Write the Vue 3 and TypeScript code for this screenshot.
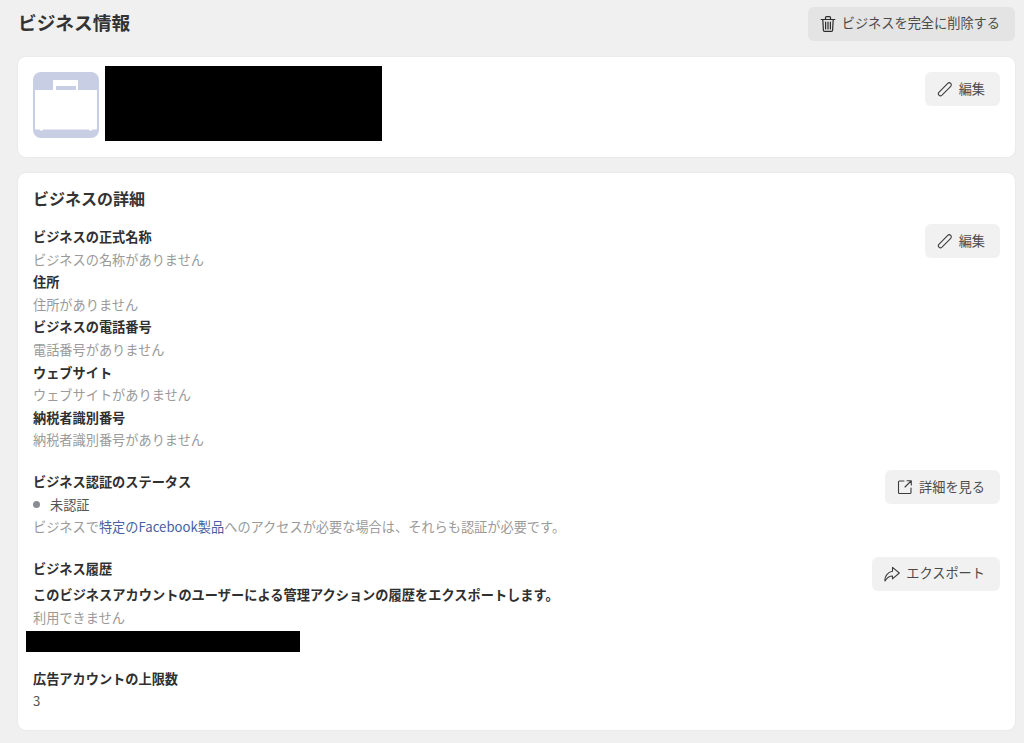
<script setup lang="ts">
const fields = [
  { label: 'ビジネスの正式名称', value: 'ビジネスの名称がありません' },
  { label: '住所', value: '住所がありません' },
  { label: 'ビジネスの電話番号', value: '電話番号がありません' },
  { label: 'ウェブサイト', value: 'ウェブサイトがありません' },
  { label: '納税者識別番号', value: '納税者識別番号がありません' },
]
</script>

<template>
  <main class="page">
    <header class="top">
      <h1>ビジネス情報</h1>
      <button class="btn danger">
        <svg class="ic trash" viewBox="0 0 16 18"><path d="M1.200 4.500h13.600M5.500 4.300V2.600c0-.6.400-1 1-1h3c.6 0 1 .4 1 1v1.700M2.800 4.700l.6 10.500c0 .7.500 1.200 1.200 1.200h6.800c.7 0 1.200-.5 1.200-1.200l.6-10.500M5.600 7v7M8 7v7M10.400 7v7" /></svg>
        <span>ビジネスを完全に削除する</span>
      </button>
    </header>

    <section class="card brand">
      <div class="logo">
        <svg viewBox="0 0 66 66" width="66" height="66">
          <rect width="66" height="66" rx="8" fill="#c8cfe4" />
          <path d="M20 18V8h25v10h-2v-4H23v4z" fill="#fff" />
          <path d="M2 18h62v38.500q0 1-1 1h-4v1h-3v-1H10v1H7v-1H3q-1 0-1-1z" fill="#fff" />
        </svg>
      </div>
      <div class="redact name"></div>
      <button class="btn edit">
        <svg class="ic" viewBox="0 0 16 16"><path d="M2 14.200c-.7-.7-.8-2-.1-2.800L10.500 2.600c1-1 2.400-1 3.200-.2.800.8.800 2.200-.2 3.200L5 14.200c-.9.800-2.200.8-3 0z" /></svg>
        <span>編集</span>
      </button>
    </section>

    <section class="card details">
      <h2>ビジネスの詳細</h2>
      <div class="split fieldset">
        <dl>
          <div v-for="f in fields" :key="f.label">
            <dt>{{ f.label }}</dt>
            <dd>{{ f.value }}</dd>
          </div>
        </dl>
        <button class="btn edit">
          <svg class="ic" viewBox="0 0 16 16"><path d="M2 14.200c-.7-.7-.8-2-.1-2.800L10.500 2.600c1-1 2.400-1 3.200-.2.800.8.800 2.200-.2 3.200L5 14.200c-.9.800-2.200.8-3 0z" /></svg>
          <span>編集</span>
        </button>
      </div>

      <div class="split status">
        <div>
          <div class="label">ビジネス認証のステータス</div>
          <div class="state"><i class="dot"></i>未認証</div>
          <p class="muted">ビジネスで<a href="#">特定のFacebook製品</a>へのアクセスが必要な場合は、それらも認証が必要です。</p>
        </div>
        <button class="btn">
          <svg class="ic" viewBox="0 0 16 16"><path d="M7 2H2.500c-.6 0-1 .4-1 1v10.500c0 .6.400 1 1 1H13c.6 0 1-.4 1-1V9M10 1.700h4.300V6M14 2L8 8" /></svg>
          <span>詳細を見る</span>
        </button>
      </div>

      <div class="split history">
        <div class="grow">
          <div class="label">ビジネス履歴</div>
          <div class="label desc">このビジネスアカウントのユーザーによる管理アクションの履歴をエクスポートします。</div>
          <p class="muted">利用できません</p>
          <div class="redact line"></div>
        </div>
        <button class="btn">
          <svg class="ic" viewBox="0 0 16 16"><path d="M8.500 1.300L15.300 7l-6.800 5.800V10C5.500 10 3 11.500 1 15c-.6-4.300 2.500-9 7.500-9.700z" /></svg>
          <span>エクスポート</span>
        </button>
      </div>

      <div class="limit">
        <div class="label">広告アカウントの上限数</div>
        <div class="value">3</div>
      </div>
    </section>
  </main>
</template>

<style scoped>
.page {
  box-sizing: border-box;
  width: 1024px;
  height: 743px;
  overflow: hidden;
  padding: 7px 9px 0 18px;
  font-family: "Noto Sans CJK JP", "Liberation Sans", sans-serif;
  font-size: 13.2px;
  line-height: 22.6px;
  color: #2b2b2b;
}
.top {
  display: flex;
  justify-content: space-between;
  align-items: flex-start;
  height: 34px;
  margin-bottom: 16px;
}
h1 {
  margin: -1px 0 0;
  font-size: 18.700px;
  line-height: 32px;
  font-weight: 700;
  color: #333;
}
h2 {
  margin: 0 0 17px;
  font-size: 16px;
  line-height: 22px;
  font-weight: 700;
  color: #333;
}
.btn {
  display: inline-flex;
  align-items: center;
  gap: 6px;
  height: 34px;
  padding: 0 15px 0 12px;
  border: 0;
  border-radius: 6px;
  background: #f1f1f1;
  color: #4b4b4b;
  font: inherit;
  flex: none;
}
.danger {
  background: #e4e4e4;
}
.danger span {
  margin-top: -2px;
}
.ic {
  width: 16px;
  height: 16px;
  fill: none;
  stroke: #3c3c3c;
  stroke-width: 1.1;
  stroke-linejoin: round;
  stroke-linecap: round;
}
.trash {
  height: 18px;
  stroke-width: 1.2;
  stroke: #2c2c2c;
}
.card {
  background: #fff;
  border-radius: 8px;
  box-shadow: 0 0 2px rgba(0, 0, 0, 0.08);
}
.brand {
  display: flex;
  align-items: flex-start;
  height: 100px;
  padding: 9px 15px 0;
  margin-bottom: 16px;
  box-sizing: border-box;
}
.logo {
  height: 66px;
  margin-top: 6px;
  margin-right: 6px;
}
.logo svg {
  display: block;
}
.redact {
  background: #000;
}
.name {
  width: 277px;
  height: 75px;
}
.brand .edit {
  margin-left: auto;
  margin-top: 6px;
}
.details {
  box-sizing: border-box;
  height: 557px;
  padding: 14px 15px 0;
}
.split {
  display: flex;
  justify-content: space-between;
  align-items: flex-start;
}
.grow {
  flex: 1;
}
dl,
dd {
  margin: 0;
}
dl > div {
  height: 45.200px;
}
dt,
.label {
  font-weight: 700;
  color: #2f2f2f;
}
dd,
.muted {
  color: #9a9a9a;
  margin: 0;
}
.fieldset .edit {
  margin-top: -2px;
}
.status {
  margin-top: 19px;
}
.status .btn {
  margin-top: -1px;
}
.state {
  display: flex;
  align-items: center;
  color: #555;
}
.dot {
  width: 7px;
  height: 7px;
  border-radius: 50%;
  background: #8b8d94;
  margin-right: 10px;
}
a {
  color: #4a5f9e;
  text-decoration: none;
}
.history {
  margin-top: 19px;
}
.history .btn {
  margin-top: -1px;
}
.desc {
  margin-top: 4px;
  letter-spacing: 0.03px;
}
.line {
  width: 274px;
  height: 21px;
  margin: 1px 0 0 -7px;
}
.limit {
  margin-top: 16px;
}
.value {
  color: #555;
  margin-top: 0;
}
</style>

<style>
html,
body {
  margin: 0;
  background: #f0f0f0;
}
</style>
